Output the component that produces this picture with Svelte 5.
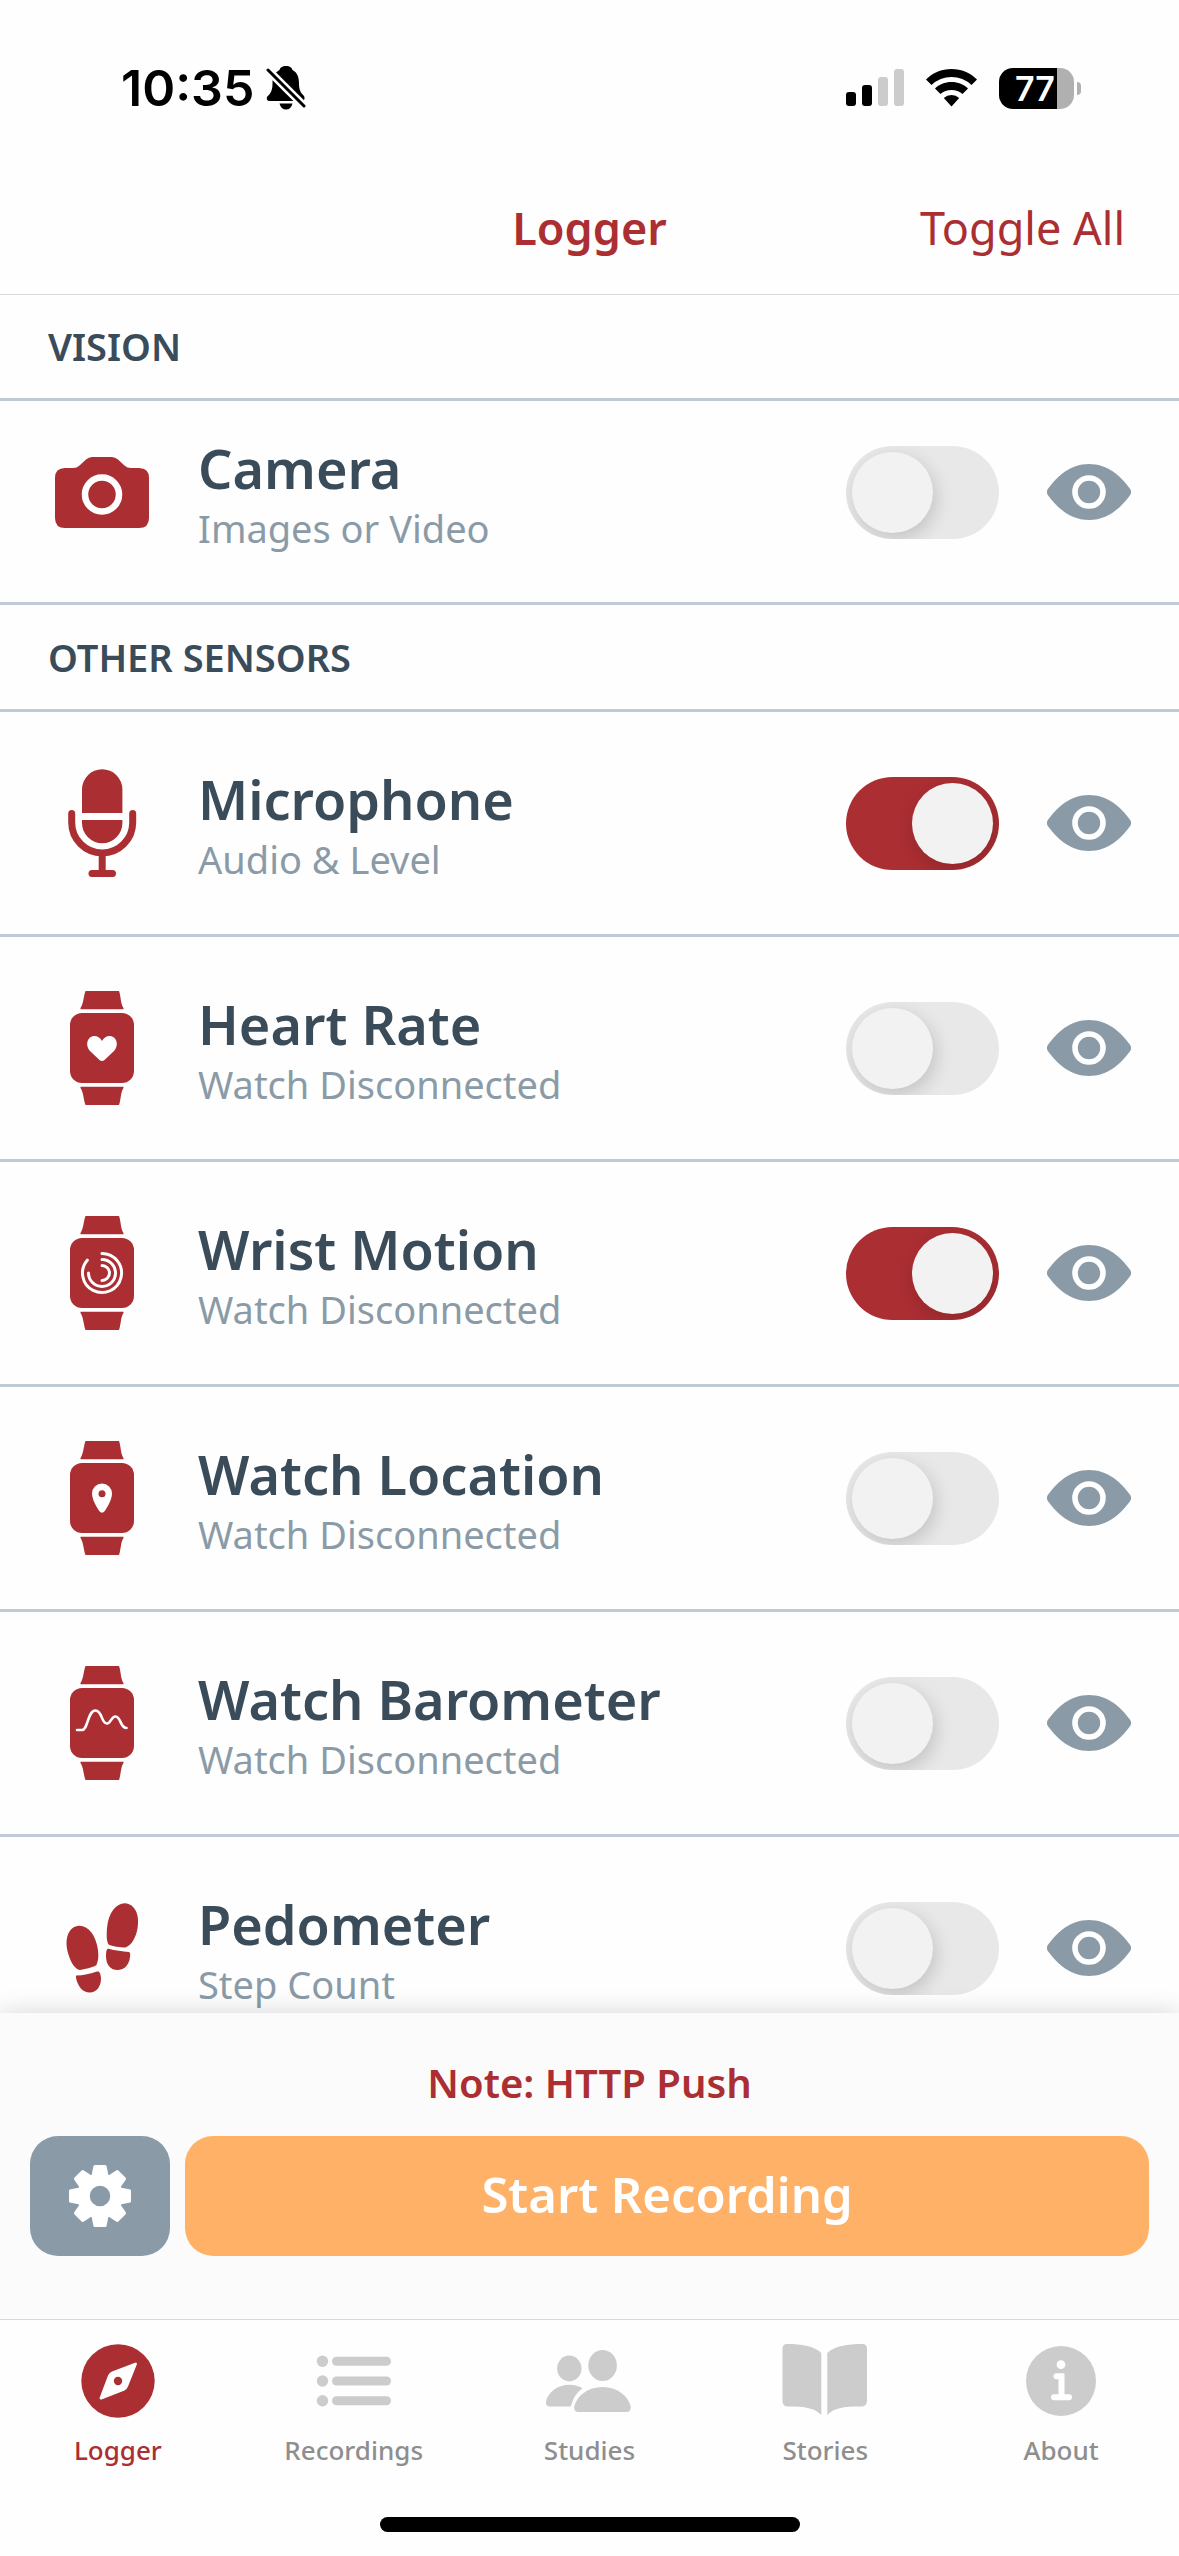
<script>
  let sensors = $state([
    { group: 'vision', name: 'Camera', detail: 'Images or Video', icon: 'camera', on: false },
    { group: 'other', name: 'Microphone', detail: 'Audio & Level', icon: 'mic', on: true },
    { group: 'other', name: 'Heart Rate', detail: 'Watch Disconnected', icon: 'heart', on: false },
    { group: 'other', name: 'Wrist Motion', detail: 'Watch Disconnected', icon: 'motion', on: true },
    { group: 'other', name: 'Watch Location', detail: 'Watch Disconnected', icon: 'location', on: false },
    { group: 'other', name: 'Watch Barometer', detail: 'Watch Disconnected', icon: 'barometer', on: false },
    { group: 'other', name: 'Pedometer', detail: 'Step Count', icon: 'steps', on: false }
  ]);

  const groups = [
    { id: 'vision', title: 'VISION' },
    { id: 'other', title: 'OTHER SENSORS' }
  ];

  const tabs = ['Logger', 'Recordings', 'Studies', 'Stories', 'About'];
  let active = $state('Logger');

  function toggleAll() {
    const next = !sensors.every((s) => s.on);
    for (const s of sensors) s.on = next;
  }
</script>

{#snippet sensorIcon(kind)}
  <svg class="sensor-icon" viewBox="0 0 114 114" aria-hidden="true">
    {#if kind === 'camera'}
      <path d="M20 33H28Q32 33 34.500 30.500L41 24.500Q44 22 47 22H67Q70 22 73 24.500L79.500 30.500Q82 33 86 33H94Q104 33 104 43V83Q104 93 94 93H20Q10 93 10 83V43Q10 33 20 33Z" />
      <circle cx="57" cy="59.500" r="17" fill="none" stroke="#fff" stroke-width="6.500" />
    {:else if kind === 'mic'}
      <path d="M37 47V23.500A20.200 20.200 0 0 1 77.400 23.500V47ZM37 54H77.400V57A20.200 20.200 0 0 1 37 57Z" />
      <path class="line" d="M26.700 47.500V56.500A30.500 30.500 0 0 0 87.700 56.500V47.500M57.200 87V107M47 107.500H67.500" stroke-width="7" />
    {:else if kind === 'steps'}
      <path d="M34 34.800C43 34.500 51 44 53 59C54 68 52.500 71 51.500 74C48 76.500 39 78.500 34.500 79C28 77 24.500 68 22.500 60C19.500 46 24.500 35.300 34 34.800Z" />
      <path d="M31.500 84.500C38 84.500 46 82.500 52 80.500C54.500 80 55.500 82 56 87C56.200 96 51 101.500 45 101.500C37.500 101.500 34 96.500 31.500 89C31 86.500 30.500 84.500 31.500 84.500Z" />
      <path d="M80 12.200C90 12.800 95 24 92.500 37.500C91 46 87 54 80.500 56.500C75 56.500 67.500 55.500 63.500 53.500C61.500 49.500 61.500 45 62 37C63.500 21 71.500 12 80 12.200Z" />
      <path d="M63.500 57.800C70 59.500 77.500 60.500 84 61C86 62 85 66 84.500 69C82.500 75.500 78.500 79 72.500 79C66 79 61 74.500 61 65C61.200 60.500 61.500 57.500 63.500 57.800Z" />
    {:else}
      <path d="M40.500 0H74C76 5 75.500 13 78.500 17V18.200H35.500V17C38.500 13 38.500 5 40.500 0Z" />
      <rect x="25" y="22" width="64" height="70" rx="12" />
      <path d="M35.500 95.800H78.500V97C75.500 101 76 109 74 114H40.500C38.500 109 38.500 101 35.500 97Z" />
      {#if kind === 'heart'}
        <path fill="#fff" d="M57 50C54 44 48 44 45 46.500C41 50 41.500 56 45 60L54.500 69Q57 71 59.500 69L69 60C72.500 56 73 50 69 46.500C66 44 60 44 57 50Z" />
      {:else if kind === 'motion'}
        <path class="arc" d="M57 37.500A19.500 19.500 0 1 1 42.300 44.200M57 43.500A13.500 13.500 0 1 1 43.500 57M57 49.500A7.500 7.500 0 0 1 57 64.500" stroke-width="3" />
      {:else if kind === 'location'}
        <path fill="#fff" d="M57 42.500A10 10 0 0 1 67 52.500C67 58 63 65 59.800 70Q57 73.500 54.200 70C51 65 47 58 47 52.500A10 10 0 0 1 57 42.500Z" />
        <circle cx="57" cy="52.800" r="3.500" />
      {:else}
        <path class="arc" d="M32 64H37C43 64 42.500 44.500 50.500 44.500C57.500 44.500 56 57.500 62 57.500C66 57.500 66 50.500 70.500 50.500C76 50.500 75 62 81.500 62" stroke-width="2.600" />
      {/if}
    {/if}
  </svg>
{/snippet}

{#snippet tabIcon(name)}
  <svg class="tab-icon" viewBox="0 0 90 90" aria-hidden="true">
    {#if name === 'Logger'}
      <circle cx="45" cy="45" r="36.700" />
      <path fill="#fff" d="M62 26.700Q64.500 26 63.800 28.500L55 50.500Q54 53 51.500 54.500L28.500 63.400Q26 64 26.700 61.500L35 39.500Q36.500 36.500 39 35.500Z" />
      <circle cx="45" cy="45" r="4.200" />
    {:else if name === 'Recordings'}
      {#each [25.3, 45, 64.7] as y}
        <circle cx="13.500" cy={y} r="5.700" />
        <rect x="23" y={y - 4.5} width="59" height="9" rx="4.500" />
      {/each}
    {:else if name === 'Studies'}
      <ellipse cx="25.300" cy="32.500" rx="12.200" ry="12.900" />
      <ellipse cx="58.600" cy="29.500" rx="14.300" ry="15.400" />
      <path d="M58.500 51C73 51 84 59.500 86.700 70.500Q87 76 82.500 76H34.500Q30 76 30.200 70.500C33 59.500 44 51 58.500 51Z" />
      <path d="M25.500 48.700Q33 48.700 38.500 52.300Q30 58.500 27.300 69Q27 70.500 25.500 70.500H6Q1.500 70.500 2 65.500C4 56 14 48.700 25.500 48.700Z" />
    {:else if name === 'Stories'}
      <path d="M7 8C22 8 34 10 41.300 17V79C35 72 25 70.500 8 70.500Q2.500 70.500 2.500 65V13Q2.500 8 7 8Z" />
      <path d="M82.500 8C67.500 8 54.500 10 47.300 17V79C53.500 72 63.500 70.500 80.500 70.500Q87 70.500 87 65V13Q87 8 82.500 8Z" />
    {:else}
      <circle cx="45" cy="45" r="35" />
      <circle cx="45" cy="28.700" r="4.400" fill="#fff" />
      <path class="arc" d="M40.500 40.200H45.500V61M38 61.200H53" stroke-width="6" />
    {/if}
  </svg>
{/snippet}

<div class="screen">
  <div class="status">
    <div class="clock">
      <span>10:35</span>
      <svg class="bell" viewBox="0 0 40 44" aria-hidden="true">
        <path d="M20 0C24 0 26 2 26.500 4C32 7 33 12 33 18C33 24 35 27 38 30Q39.500 33 37 35H3Q0 34 1 31C4 28 6.500 25 6.500 18C6.500 11 8 7 13.500 4C14 2 16 0 20 0ZM13.500 37.500H26.500Q25 43.500 20 43.500Q15 43.500 13.500 37.500Z" />
        <path d="M2 4L38 40" stroke="#fff" stroke-width="8" />
        <path d="M2 4L38 40" stroke="#000" stroke-width="3" stroke-linecap="round" />
      </svg>
    </div>
    <div class="signals">
      <svg class="cell" viewBox="0 0 58 38" aria-hidden="true">
        <rect x="0" y="23" width="10" height="14" rx="3" />
        <rect x="16" y="16" width="10" height="21" rx="3" />
        <rect x="32" y="8" width="10" height="29" rx="3" fill="#ccc" />
        <rect x="48" y="0" width="10" height="37" rx="3" fill="#ccc" />
      </svg>
      <svg class="wifi" viewBox="0 0 51 38" aria-hidden="true">
        <path d="M25.500 0C35.500 0 44.500 4 51 10.500L45.500 16Q37 8 25.500 8Q14 8 5.500 16L0 10.500C6.500 4 15.500 0 25.500 0Z" />
        <path d="M25.500 13C32 13 38 15.500 42 19.500L36.500 25Q32 21 25.500 21Q19 21 14.500 25L9 19.500C13 15.500 19 13 25.500 13Z" />
        <path d="M25.500 26Q30 26 33.200 29L25.500 37.500L17.800 29Q21 26 25.500 26Z" />
      </svg>
      <div class="battery"><span>77</span></div>
    </div>
  </div>

  <header>
    <h1>Logger</h1>
    <button class="toggle-all" onclick={toggleAll}>Toggle All</button>
  </header>

  <main>
    {#each groups as group}
      <section class={group.id}>
        <h2>{group.title}</h2>
        {#each sensors.filter((s) => s.group === group.id) as sensor}
          <div class="row">
            {@render sensorIcon(sensor.icon)}
            <label class="text" for={sensor.icon}>
              <span class="name">{sensor.name}</span>
              <span class="detail">{sensor.detail}</span>
            </label>
            <input id={sensor.icon} class="switch" type="checkbox" role="switch" bind:checked={sensor.on} />
            <button class="eye" aria-label="Preview {sensor.name}">
              <svg viewBox="0 0 84 56" aria-hidden="true">
                <path d="M42 0C60 0 73 11 83.200 25Q85 28 83.200 31C73 45 60 56 42 56C24 56 11 45 0.800 31Q-1 28 0.800 25C11 11 24 0 42 0Z" />
                <circle cx="42" cy="28" r="14" fill="none" stroke="#fff" stroke-width="5.600" />
              </svg>
            </button>
          </div>
        {/each}
      </section>
    {/each}
  </main>

  <div class="dock">
    <p>Note: HTTP Push</p>
    <div class="actions">
      <button class="settings" aria-label="Settings">
        <svg viewBox="-32 -32 64 64" aria-hidden="true">
          {#each [0, 45, 90, 135, 180, 225, 270, 315] as angle}
            <path d="M-8.500 -20L-6.700 -29.500Q-6.500 -31 -5 -31H5Q6.500 -31 6.700 -29.500L8.500 -20Z" transform="rotate({angle})" />
          {/each}
          <circle r="16.500" fill="none" stroke="#fff" stroke-width="12.500" />
        </svg>
      </button>
      <button class="start">Start Recording</button>
    </div>
  </div>

  <nav>
    {#each tabs as tab}
      <a href="#{tab.toLowerCase()}" class:active={active === tab} onclick={() => (active = tab)}>
        {@render tabIcon(tab)}
        <span>{tab}</span>
      </a>
    {/each}
  </nav>
  <div class="home"><div class="indicator"></div></div>
</div>

<style>
  :global(body) {
    background: #fff;
  }
  .screen {
    --red: #ab2e33;
    --ink: #3a4b59;
    --slate: #8a9ba7;
    --rule: #bfcad5;
    display: flex;
    flex-direction: column;
    height: 100vh;
    background: #fefefe;
    font-family: 'Noto Sans', 'Open Sans', sans-serif;
    color: var(--ink);
  }
  button {
    border: 0;
    padding: 0;
    background: none;
    font: inherit;
    color: inherit;
    cursor: pointer;
  }
  svg {
    display: block;
    flex: none;
  }
  h1,
  h2,
  p {
    margin: 0;
  }

  .status {
    display: flex;
    justify-content: space-between;
    align-items: center;
    height: 176px;
    padding: 0 98px 0 121px;
    box-sizing: border-box;
    font-family: Inter, sans-serif;
    color: #000;
  }
  .clock,
  .signals {
    display: flex;
    align-items: center;
  }
  .clock {
    gap: 12px;
    font-size: 50px;
    font-weight: 600;
  }
  .bell {
    width: 40px;
    height: 44px;
  }
  .signals {
    gap: 22px;
  }
  .cell {
    width: 58px;
    height: 38px;
  }
  .wifi {
    width: 51px;
    height: 38px;
  }
  .battery {
    position: relative;
    width: 75px;
    height: 41px;
    margin-right: 7px;
    padding-right: 3px;
    box-sizing: border-box;
    border-radius: 14px;
    background: linear-gradient(90deg, #000 77%, #b0b0b0 77%);
    color: #fff;
    font-size: 34px;
    font-weight: 600;
    line-height: 41px;
    text-align: center;
  }
  .battery::after {
    content: '';
    position: absolute;
    left: 78px;
    top: 14px;
    width: 4px;
    height: 13px;
    border-radius: 0 6px 6px 0;
    background: #b0b0b0;
  }

  header {
    display: grid;
    grid-template-columns: 1fr auto 1fr;
    align-items: center;
    height: 119px;
    padding: 0 54px 16px;
    box-sizing: border-box;
    border-bottom: 1px solid #d8d8d8;
    color: var(--red);
  }
  h1 {
    grid-column: 2;
    font-size: 45px;
    font-weight: 600;
  }
  .toggle-all {
    justify-self: end;
    font-size: 45px;
  }

  main {
    flex: 1;
    min-height: 0;
    overflow-y: auto;
    scrollbar-width: none;
  }
  h2 {
    padding: 0 48px;
    border-bottom: 3px solid var(--rule);
    font-size: 38px;
    font-weight: 600;
    line-height: 104px;
  }
  .vision h2 {
    line-height: 103px;
  }
  .row {
    display: flex;
    align-items: center;
    padding: 49px 48px 49px 45px;
    border-bottom: 3px solid var(--rule);
  }
  .vision .row {
    padding-top: 29px;
    padding-bottom: 48px;
  }
  .sensor-icon {
    width: 114px;
    height: 114px;
    fill: var(--red);
  }
  .line {
    fill: none;
    stroke: var(--red);
    stroke-linecap: round;
  }
  .arc {
    fill: none;
    stroke: #fff;
    stroke-linecap: round;
  }
  .text {
    display: flex;
    flex: 1;
    flex-direction: column;
    margin-left: 39px;
    padding-top: 4px;
  }
  .name {
    font-size: 54px;
    font-weight: 600;
    line-height: 68px;
  }
  .detail {
    font-size: 38px;
    line-height: 52px;
    color: var(--slate);
  }
  .switch {
    display: flex;
    flex: none;
    appearance: none;
    width: 153px;
    height: 93px;
    margin: 0 48px 0 0;
    padding: 6px;
    box-sizing: border-box;
    overflow: hidden;
    border-radius: 47px;
    background: #e8e8e8;
    cursor: pointer;
  }
  .switch::before {
    content: '';
    width: 81px;
    height: 81px;
    border-radius: 50%;
    background: #f2f2f2;
    box-shadow: 3px 6px 18px rgba(0, 0, 0, 0.16);
  }
  .switch:checked {
    justify-content: flex-end;
    background: var(--red);
  }
  .eye svg {
    width: 84px;
    height: 56px;
    fill: var(--slate);
  }

  .dock {
    position: relative;
    padding: 38px 30px 63px;
    background: #fbfbfb;
    box-shadow: 0 0 24px rgba(0, 0, 0, 0.16);
  }
  .dock p {
    margin-bottom: 21px;
    font-size: 40px;
    font-weight: 600;
    line-height: 64px;
    text-align: center;
    color: var(--red);
  }
  .actions {
    display: flex;
    gap: 15px;
  }
  .actions button {
    height: 120px;
    border-radius: 28px;
    color: #fff;
  }
  .settings {
    display: flex;
    align-items: center;
    justify-content: center;
    width: 140px;
    background: var(--slate);
  }
  .settings svg {
    width: 64px;
    height: 64px;
    fill: #fff;
  }
  .start {
    flex: 1;
    padding-bottom: 4px;
    background: #ffb267;
    font-size: 49px;
    font-weight: 600;
  }

  nav {
    position: relative;
    display: grid;
    grid-template-columns: repeat(5, 1fr);
    padding-top: 16px;
    border-top: 1px solid #d8d8d8;
    background: #fefefe;
  }
  nav a {
    display: flex;
    flex-direction: column;
    align-items: center;
    gap: 6px;
    font-size: 26px;
    font-weight: 500;
    line-height: 36px;
    text-decoration: none;
    color: #8e8e8f;
  }
  nav a.active {
    color: var(--red);
  }
  .tab-icon {
    width: 90px;
    height: 90px;
    fill: #ccc;
  }
  .active .tab-icon {
    fill: var(--red);
  }
  .home {
    display: flex;
    justify-content: center;
    position: relative;
    padding: 49px 0 24px;
    background: #fefefe;
  }
  .indicator {
    width: 420px;
    height: 15px;
    border-radius: 8px;
    background: #000;
  }
</style>
